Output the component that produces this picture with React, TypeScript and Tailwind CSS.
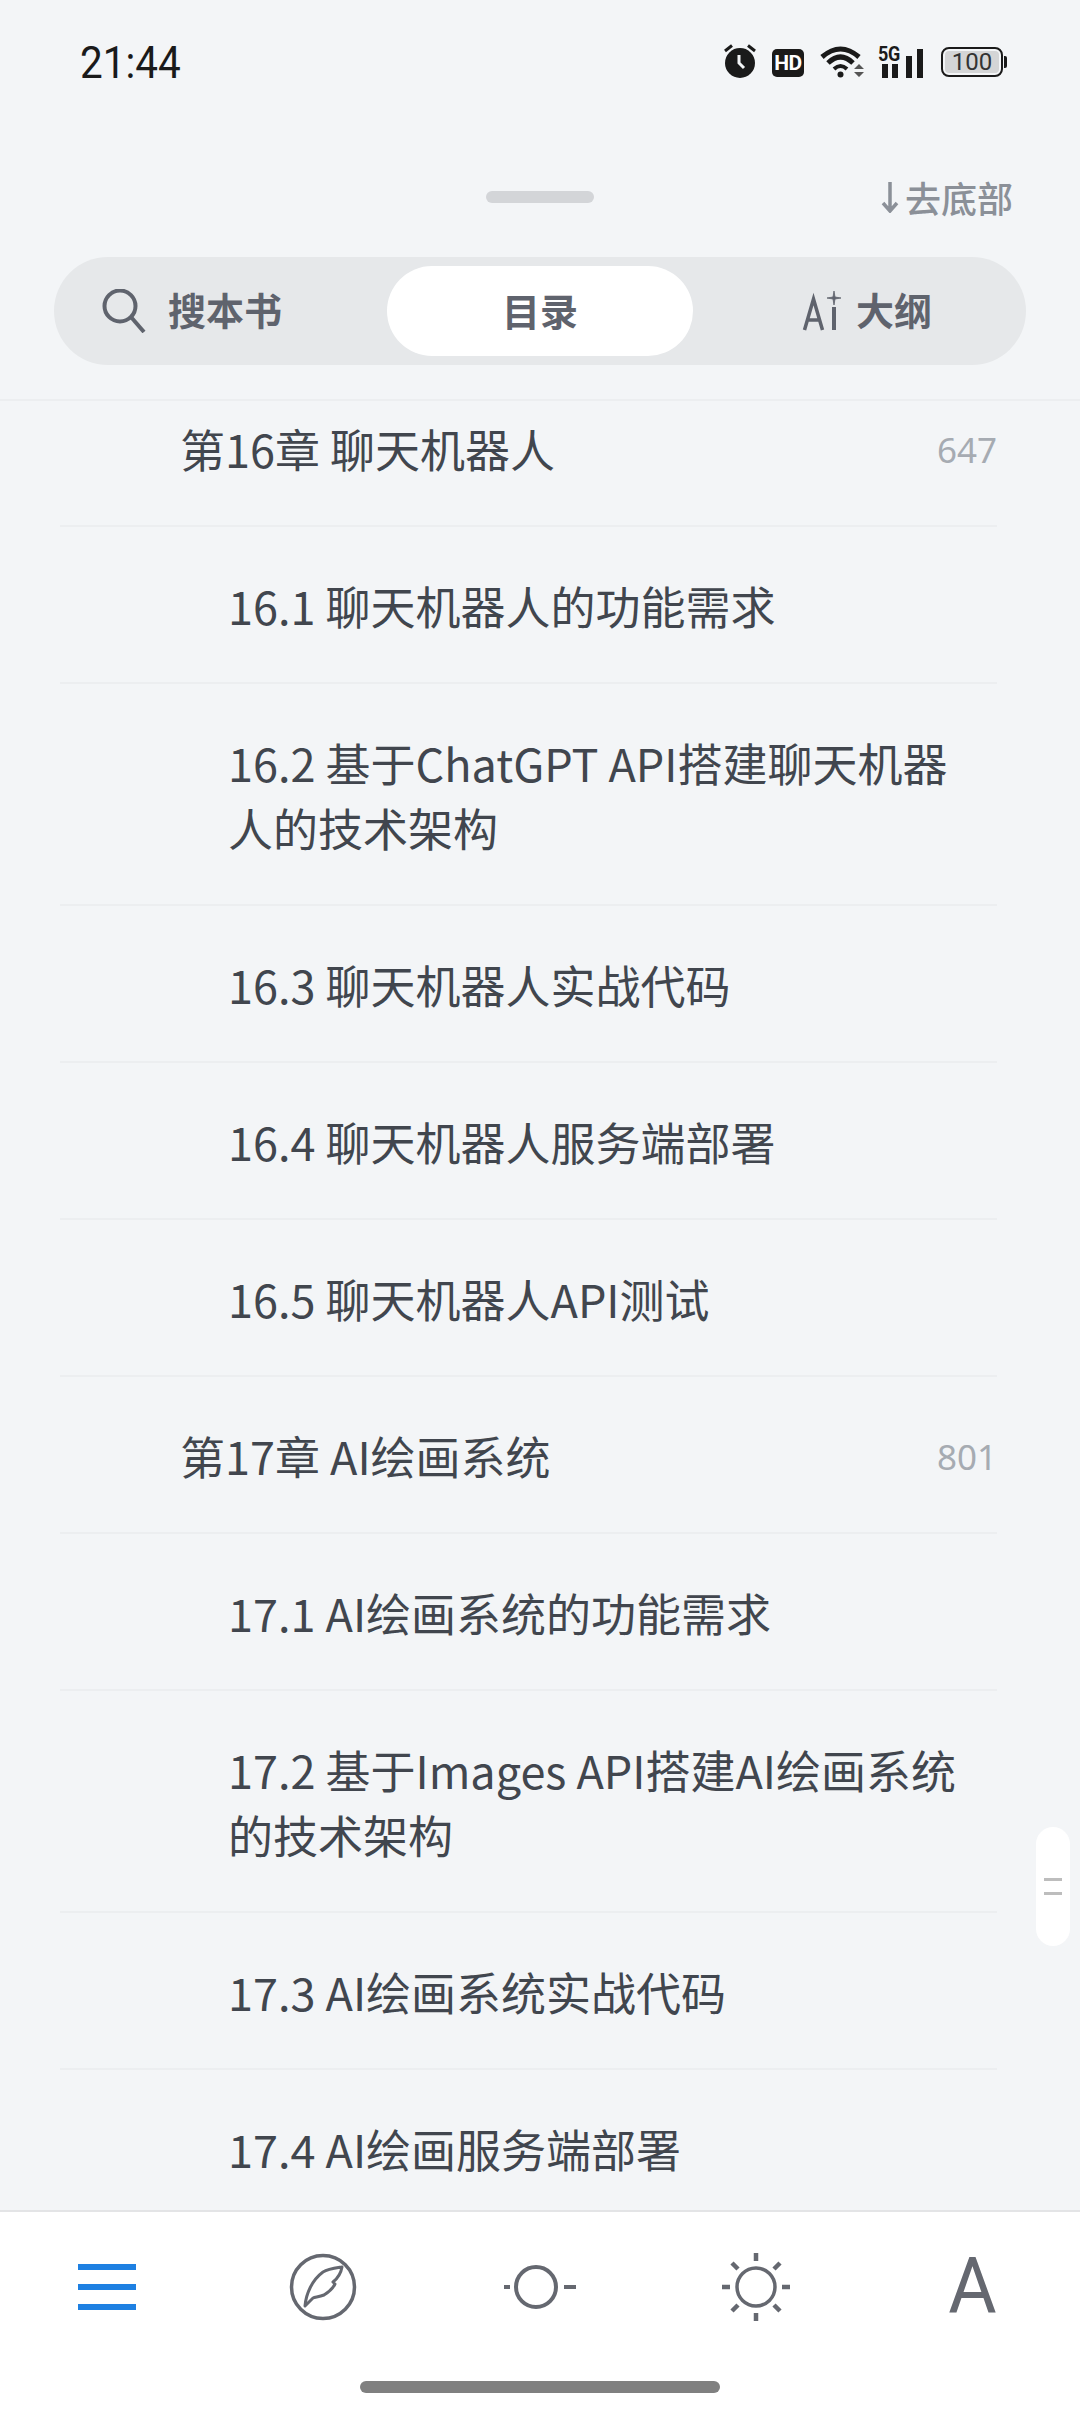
const CJK = "font-['Noto_Sans_CJK_SC','Noto_Sans',sans-serif]";

type Row = { title: string; level: 1 | 2; page?: string };

const rows: Row[] = [
  { title: '第16章 聊天机器人', level: 1, page: '647' },
  { title: '16.1 聊天机器人的功能需求', level: 2 },
  { title: '16.2 基于ChatGPT API搭建聊天机器\n人的技术架构', level: 2 },
  { title: '16.3 聊天机器人实战代码', level: 2 },
  { title: '16.4 聊天机器人服务端部署', level: 2 },
  { title: '16.5 聊天机器人API测试', level: 2 },
  { title: '第17章 AI绘画系统', level: 1, page: '801' },
  { title: '17.1 AI绘画系统的功能需求', level: 2 },
  { title: '17.2 基于Images API搭建AI绘画系统\n的技术架构', level: 2 },
  { title: '17.3 AI绘画系统实战代码', level: 2 },
  { title: '17.4 AI绘画服务端部署', level: 2 },
];

function StatusIcons() {
  return (
    <div className="flex items-center">
      {/* alarm */}
      <svg width="32" height="34" viewBox="0 0 32 34">
        <circle cx="16" cy="19" r="15" fill="#1a1a1a" />
        <path d="M1 7 L8 1.5 M31 7 L24 1.5" stroke="#1a1a1a" strokeWidth="3" />
        <path d="M15 11 V19 L20 24" stroke="#f3f5f7" strokeWidth="3" fill="none" />
      </svg>
      {/* HD */}
      <div className="mt-[4px] ml-[16px] flex h-[28px] w-[32px] items-center justify-center rounded-[5px] bg-[#1a1a1a] font-['Roboto',sans-serif] text-[21px] leading-none font-bold tracking-[-0.5px] text-white">
        HD
      </div>
      {/* wifi */}
      <svg width="44" height="34" viewBox="0 0 44 34" className="ml-[16px]">
        <path d="M2 13 Q20.5 -3 39 13" stroke="#1a1a1a" strokeWidth="5" fill="none" />
        <path d="M8 19 Q20.5 7 33 19" stroke="#1a1a1a" strokeWidth="5" fill="none" />
        <path d="M14 25 Q20.5 19 27 25" stroke="#1a1a1a" strokeWidth="4" fill="none" />
        <circle cx="20.5" cy="30.5" r="3" fill="#1a1a1a" />
        <path d="M34 25 L39 20 L44 25 Z M34 28 H44 L39 33 Z" fill="#555" />
      </svg>
      {/* 5G + signal */}
      <div className="relative ml-[14px] h-[33px] w-[45px]">
        <span className="absolute top-[-1px] left-0 origin-left scale-x-90 font-['Roboto',sans-serif] text-[20px] leading-none font-bold tracking-[-0.5px] text-[#1a1a1a]">
          5G
        </span>
        <div className="absolute right-0 bottom-0 flex items-end">
          <div className="h-[14px] w-[6px] bg-[#1a1a1a]" />
          <div className="ml-[4px] h-[14px] w-[6px] bg-[#1a1a1a]" />
          <div className="ml-[8px] h-[22px] w-[6px] bg-[#1a1a1a]" />
          <div className="ml-[5px] h-[29px] w-[6px] bg-[#1a1a1a]" />
        </div>
      </div>
      {/* battery */}
      <div className="mt-[2px] ml-[18px] flex items-center">
        <div className="flex h-[30px] w-[62px] items-center rounded-[8px] border-2 border-[#1a1a1a] p-[2px]">
          <div className="flex h-full w-full items-center justify-center rounded-[4px] bg-[#d4d5d6] font-['Roboto',sans-serif] text-[24px] leading-none text-[#333]">
            100
          </div>
        </div>
        <div className="ml-[1px] h-[12px] w-[3px] rounded-r-[2px] bg-[#1a1a1a]" />
      </div>
    </div>
  );
}

function TocRow({ row }: { row: Row }) {
  return (
    <div
      className={`flex items-center justify-between border-b-2 border-[#eceef0] pt-[46px] pb-[44px] text-[#41464e] ${
        row.level === 1 ? 'pl-[120px]' : 'pl-[168px]'
      }`}
    >
      <div className={`${CJK} text-[45px] leading-[65px] whitespace-pre-line`}>{row.title}</div>
      {row.page && (
        <div className="pt-[2px] font-['Noto_Sans',sans-serif] text-[35px] leading-none text-[#a6abb2]">{row.page}</div>
      )}
    </div>
  );
}

export default function App() {
  return (
    <div className={`${CJK} relative flex h-[2412px] w-[1080px] flex-col overflow-hidden bg-[#f3f5f7]`}>
      {/* status bar */}
      <div className="flex h-[122px] shrink-0 items-center justify-between pr-[73px] pl-[80px]">
        <div className="origin-left scale-x-[0.92] pt-[3px] font-['Roboto',sans-serif] text-[44px] leading-none font-normal text-[#1a1a1a]">
          21:44
        </div>
        <StatusIcons />
      </div>

      {/* sheet header */}
      <div className="relative flex h-[135px] shrink-0 justify-center">
        <div className="mt-[69px] h-[12px] w-[108px] rounded-full bg-[#d3d5d8]" />
        <div className="absolute top-[56px] right-[67px] flex items-center text-[36px] leading-[38px] font-medium text-[#8b9098]">
          <svg width="18" height="32" viewBox="0 0 18 32" className="mr-[6px]">
            <path d="M9 1 V30 M2 22 L9 30 L16 22" stroke="#8b9098" strokeWidth="3.5" fill="none" />
          </svg>
          去底部
        </div>
      </div>

      {/* tabs */}
      <div className="shrink-0 border-b-2 border-[#eceef0] pb-[34px]">
        <div className="mx-[54px] flex h-[108px] items-center rounded-full bg-[#e6e8ea] px-[9px]">
          <div className="flex w-[324px] items-center pl-[39px] text-[#5f636d]">
            <svg width="44" height="44" viewBox="0 0 44 44">
              <circle cx="18" cy="17" r="15.5" stroke="#5f636d" strokeWidth="4" fill="none" />
              <path d="M29 28 L42 43" stroke="#5f636d" strokeWidth="4" />
            </svg>
            <span className="ml-[22px] pb-[4px] text-[38px] leading-none font-bold">搜本书</span>
          </div>
          <div className="flex h-[90px] w-[306px] items-center justify-center rounded-full bg-white pb-[4px] text-[38px] font-bold text-[#5f636d]">
            目录
          </div>
          <div className="flex flex-1 items-center justify-center pl-[24px] text-[#5f636d]">
            <svg width="42" height="42" viewBox="0 0 42 42">
              <path d="M2.5 40 L11.5 9 L20.5 40 M5.5 30 H17.5" stroke="#5f636d" strokeWidth="3.5" fill="none" />
              <path d="M32 17 V40" stroke="#5f636d" strokeWidth="4" />
              <path d="M32 1 L33 7 L39 8 L33 9 L32 15 L31 9 L25 8 L31 7 Z" fill="#5f636d" stroke="#5f636d" strokeWidth="0.8" />
            </svg>
            <span className="ml-[12px] pb-[4px] text-[38px] leading-none font-bold">大纲</span>
          </div>
        </div>
      </div>

      {/* toc list, scrolled */}
      <div className="min-h-0 flex-1 overflow-hidden px-[60px] pr-[83px]">
        <div className="-mt-[31px]">
          {rows.map((row) => (
            <TocRow key={row.title} row={row} />
          ))}
        </div>
      </div>

      {/* scroll thumb */}
      <div className="absolute top-[1827px] left-[1036px] flex h-[119px] w-[34px] flex-col items-center justify-center gap-[11px] rounded-full bg-white">
        <div className="h-[3px] w-[18px] bg-[#bdbdbd]" />
        <div className="h-[3px] w-[18px] bg-[#bdbdbd]" />
      </div>

      {/* bottom bar */}
      <div className="relative h-[202px] shrink-0 border-t-2 border-[#e3e4e6] bg-white">
        <div className="relative flex h-[150px] items-center">
          <div className="ml-[78px] flex w-[58px] flex-col gap-[14px]">
            <div className="h-[6px] bg-[#1e80e2]" />
            <div className="h-[6px] bg-[#1e80e2]" />
            <div className="h-[6px] bg-[#1e80e2]" />
          </div>
          <svg width="68" height="68" viewBox="0 0 68 68" className="ml-[153px]">
            <circle cx="34" cy="34" r="31.5" stroke="#656870" strokeWidth="3.5" fill="none" />
            <path
              d="M16 53 C17 41 23 27 34 19 C39 16 47 15 53 14 C52 20 49 25 44 29 L46 31 C44 35 40 39 35 42 C30 44 26 44 24 45 Z"
              stroke="#656870"
              strokeWidth="3"
              fill="none"
              strokeLinejoin="round"
            />
          </svg>
          <svg width="72" height="48" viewBox="0 0 72 48" className="ml-[147px]">
            <circle cx="32" cy="24" r="20" stroke="#656870" strokeWidth="4" fill="none" />
            <path d="M0 24 H6 M60 24 H72" stroke="#656870" strokeWidth="4" />
          </svg>
          <svg width="72" height="72" viewBox="0 0 72 72" className="ml-[144px]">
            <circle cx="36" cy="36" r="19" stroke="#656870" strokeWidth="3.5" fill="none" />
            <path
              d="M36 2 V10 M36 62 V70 M2 36 H10 M62 36 H70 M12 12 L18 18 M60 12 L54 18 M12 60 L18 54 M60 60 L54 54"
              stroke="#656870"
              strokeWidth="4.5"
            />
          </svg>
          <div className="ml-[155px] scale-x-95 font-['Roboto',sans-serif] text-[78px] leading-none font-normal text-[#656870]">A</div>
        </div>
        <div className="mx-auto mt-[19px] h-[12px] w-[360px] rounded-full bg-[#808080]" />
      </div>
    </div>
  );
}
